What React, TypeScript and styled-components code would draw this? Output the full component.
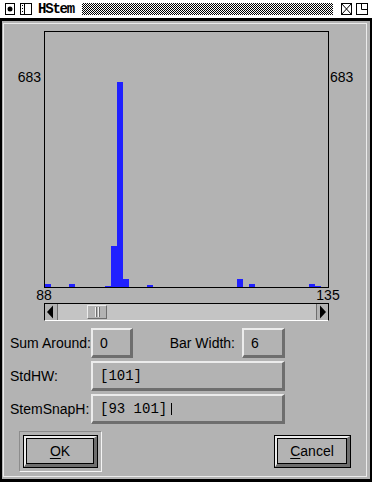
import styled, { createGlobalStyle } from "styled-components";

const GRAY = "#b3b3b3";
const LIGHT = "#ececec";
const DARK = "#6e6e6e";

// counts per bin, 6px per bin, starting at 88
const counts: Record<number, number> = {
  0: 10,
  4: 10,
  10: 3,
  11: 137,
  12: 683,
  13: 27,
  17: 7,
  32: 27,
  34: 10,
  44: 10,
  45: 3,
};
const MAX = 683;
const BAR_W = 6;
const PLOT_W = 283;
const PLOT_H = 255;
const PEAK_H = 205;

function App() {
  const bars = Object.entries(counts).map(([i, c]) => {
    const h = Math.round((c * PEAK_H) / MAX);
    return { x: Number(i) * BAR_W, h };
  });

  return (
    <>
      <GlobalStyle />
      <Window>
        <TitleBar>
          <MenuIcon width="10" height="12" viewBox="0 0 10 12">
            <rect x="0.5" y="0.5" width="9" height="11" fill="none" stroke="#000" />
            <circle cx="5" cy="6" r="2.5" fill="#000" />
          </MenuIcon>
          <IconifyIcon width="12" height="12" viewBox="0 0 12 12">
            <rect x="0.5" y="0.5" width="11" height="11" fill="none" stroke="#000" />
            <line x1="4.5" y1="0" x2="4.5" y2="12" stroke="#000" />
            <rect x="2" y="2" width="1" height="1" fill="#000" />
            <rect x="2" y="5" width="1" height="1" fill="#000" />
            <rect x="2" y="8" width="1" height="1" fill="#000" />
          </IconifyIcon>
          <Title>HStem</Title>
          <Stripe />
          <CloseIcon width="11" height="12" viewBox="0 0 11 12">
            <rect x="0.5" y="0.5" width="10" height="11" fill="none" stroke="#000" />
            <line x1="0.5" y1="0.5" x2="10.5" y2="11.5" stroke="#000" />
            <line x1="10.5" y1="0.5" x2="0.5" y2="11.5" stroke="#000" />
          </CloseIcon>
          <MaxIcon width="12" height="12" viewBox="0 0 12 12">
            <rect x="0.5" y="0.5" width="11" height="11" fill="none" stroke="#000" />
            <polyline points="5.5,0.5 5.5,6.5 11.5,6.5" fill="none" stroke="#000" />
          </MaxIcon>
        </TitleBar>

        <Body>
          <Frame>
            <ChartRow>
              <LeftAxis $top={38}>683</LeftAxis>
              <ChartBox>
                <svg width={PLOT_W} height={PLOT_H} viewBox={`0 0 ${PLOT_W} ${PLOT_H}`}>
                  {bars.map((b) => (
                    <rect key={b.x} x={b.x} y={PLOT_H - b.h} width={BAR_W} height={b.h} fill="#2020ff" />
                  ))}
                </svg>
              </ChartBox>
              <RightAxis $top={38}>683</RightAxis>
            </ChartRow>

            <AxisRow>
              <AxisLabel>88</AxisLabel>
              <AxisLabel>135</AxisLabel>
            </AxisRow>

            <ScrollBar>
              <ArrowButton $side="left">
                <svg width="8" height="14" viewBox="0 0 8 14">
                  <polygon points="1,7 7,0.5 7,13.5" fill="#000" />
                </svg>
              </ArrowButton>
              <Trough>
                <Thumb $offset={29}>
                  <Grip />
                  <Grip />
                </Thumb>
              </Trough>
              <ArrowButton $side="right">
                <svg width="8" height="14" viewBox="0 0 8 14">
                  <polygon points="7,7 1,0.5 1,13.5" fill="#000" />
                </svg>
              </ArrowButton>
            </ScrollBar>

            <FieldGrid>
              <Label>Sum Around:</Label>
              <SplitCell>
                <Field $width={42}>0</Field>
                <InlineLabel>Bar Width:</InlineLabel>
                <Field $width={43}>6</Field>
              </SplitCell>

              <Label>StdHW:</Label>
              <Field $mono>[101]</Field>

              <Label>StemSnapH:</Label>
              <Field $mono>
                [93 101]
                <Caret />
              </Field>
            </FieldGrid>

            <ButtonRow>
              <DefaultFrame>
                <Button $width={73}>
                  <u>O</u>K
                </Button>
              </DefaultFrame>
              <CancelButton $width={75}>
                <u>C</u>ancel
              </CancelButton>
            </ButtonRow>
          </Frame>
        </Body>
      </Window>
    </>
  );
}

const GlobalStyle = createGlobalStyle`
  html, body {
    margin: 0;
    padding: 0;
    background: ${GRAY};
  }
  body {
    font-family: "Liberation Sans", Arial, sans-serif;
    font-size: 14px;
    color: #000;
  }
  * {
    box-sizing: border-box;
  }
`;

const Window = styled.div`
  width: 372px;
  height: 482px;
  display: flex;
  flex-direction: column;
`;

const TitleBar = styled.div`
  height: 21px;
  background: #fff;
  border-bottom: 3px solid #000;
  display: flex;
  align-items: center;
  padding: 0 4px 0 5px;
`;

const MenuIcon = styled.svg`
  display: block;
`;

const IconifyIcon = styled.svg`
  display: block;
  margin-left: 5px;
`;

const Title = styled.span`
  margin-left: 6px;
  width: 38px;
  font-family: "Liberation Mono", "DejaVu Sans Mono", monospace;
  font-weight: bold;
  font-size: 14px;
  letter-spacing: -1.2px;
  line-height: 12px;
`;

const Stripe = styled.div`
  flex: 1;
  height: 12px;
  margin: 0 8px 0 6px;
  background: repeating-conic-gradient(#000 0% 25%, #fff 0% 50%) 0 0 / 2px 2px;
`;

const CloseIcon = styled.svg`
  display: block;
`;

const MaxIcon = styled.svg`
  display: block;
  margin-left: 4px;
`;

const Body = styled.div`
  flex: 1;
  background: ${GRAY};
  border-style: solid;
  border-color: #000;
  border-width: 0 2px 3px 2px;
  padding: 2px 3px 2px 1px;
  display: flex;
`;

const Frame = styled.div`
  flex: 1;
  border: 1px solid ${LIGHT};
  display: flex;
  flex-direction: column;
`;

const ChartRow = styled.div`
  display: flex;
  margin-top: 7px;
  line-height: 16px;
`;

const LeftAxis = styled.div<{ $top: number }>`
  width: 40px;
  padding-top: ${(p) => p.$top}px;
  padding-right: 3px;
  text-align: right;
`;

const RightAxis = styled.div<{ $top: number }>`
  padding-top: ${(p) => p.$top}px;
  padding-left: 1px;
`;

const ChartBox = styled.div`
  width: 285px;
  height: 257px;
  border: 1px solid #000;
  svg {
    display: block;
  }
`;

const AxisRow = styled.div`
  display: flex;
  justify-content: space-between;
  margin: -1px 0 0 25px;
  width: 314px;
  line-height: 16px;
`;

const AxisLabel = styled.span`
  width: 30px;
  text-align: center;
`;

const ScrollBar = styled.div`
  margin-left: 40px;
  width: 285px;
  height: 18px;
  display: flex;
  border: 1px solid #000;
  border-bottom-color: #fff;
`;

const ArrowButton = styled.div<{ $side: "left" | "right" }>`
  width: ${(p) => (p.$side === "left" ? 13 : 12)}px;
  background: ${GRAY};
  display: flex;
  align-items: center;
  justify-content: ${(p) => (p.$side === "left" ? "flex-start" : "flex-end")};
  padding: 0 1px;
  ${(p) =>
    p.$side === "left"
      ? `border-right: 1px solid ${DARK};`
      : `border-left: 1px solid ${DARK};`}
  svg {
    display: block;
  }
`;

const Trough = styled.div`
  flex: 1;
  background: #c4c4c4;
  padding-top: 1px;
`;

const Thumb = styled.div<{ $offset: number }>`
  margin-left: ${(p) => p.$offset}px;
  width: 20px;
  height: 14px;
  background: ${GRAY};
  border: 1px solid;
  border-color: ${LIGHT} ${DARK} ${DARK} ${LIGHT};
  display: flex;
  justify-content: center;
  align-items: center;
  gap: 1px;
`;

const Grip = styled.span`
  box-sizing: content-box;
  width: 0;
  height: 10px;
  border-left: 1px solid #eeeeee;
  border-right: 1px solid ${DARK};
`;

const FieldGrid = styled.div`
  margin-top: 7px;
  padding-left: 6px;
  display: grid;
  grid-template-columns: 81px 194px;
  grid-auto-rows: 30px;
  row-gap: 3px;
  align-items: center;
`;

const Label = styled.span`
  line-height: 16px;
`;

const SplitCell = styled.div`
  display: flex;
  align-items: center;
  height: 30px;
`;

const InlineLabel = styled.span`
  margin-left: auto;
  margin-right: 7px;
`;

const Field = styled.div<{ $width?: number; $mono?: boolean }>`
  width: ${(p) => (p.$width ? `${p.$width}px` : "100%")};
  height: 30px;
  border-style: solid;
  border-width: 2px 3px 3px 2px;
  border-color: ${LIGHT} ${DARK} ${DARK} ${LIGHT};
  padding-left: 7px;
  display: flex;
  align-items: center;
  font-family: ${(p) =>
    p.$mono ? `"Liberation Mono", "DejaVu Sans Mono", monospace` : "inherit"};
  white-space: pre;
`;

const Caret = styled.span`
  display: inline-block;
  width: 1px;
  height: 12px;
  margin-left: 4px;
  background: #000;
`;

const ButtonRow = styled.div`
  margin-top: 7px;
  padding: 0 15px;
  display: flex;
  justify-content: space-between;
  align-items: flex-start;
`;

const DefaultFrame = styled.div`
  border: 1px solid;
  border-color: #8c8c8c #f4f4f4 #f4f4f4 #8c8c8c;
  padding: 3px;
`;

const Button = styled.button<{ $width: number }>`
  width: ${(p) => p.$width}px;
  height: 31px;
  margin: 1px;
  padding: 0;
  background: ${GRAY};
  font-family: "Liberation Sans", Arial, sans-serif;
  font-size: 14px;
  color: #000;
  border-style: solid;
  border-width: 2px 3px 3px 2px;
  border-color: ${LIGHT} ${DARK} ${DARK} ${LIGHT};
  outline: 1px solid #000;
  box-shadow: inset 0 0 0 1px #000;
  u {
    text-decoration-thickness: 1px;
    text-underline-offset: 2px;
  }
`;

const CancelButton = styled(Button)`
  margin: 5px 1px 0 0;
`;

export default App;
